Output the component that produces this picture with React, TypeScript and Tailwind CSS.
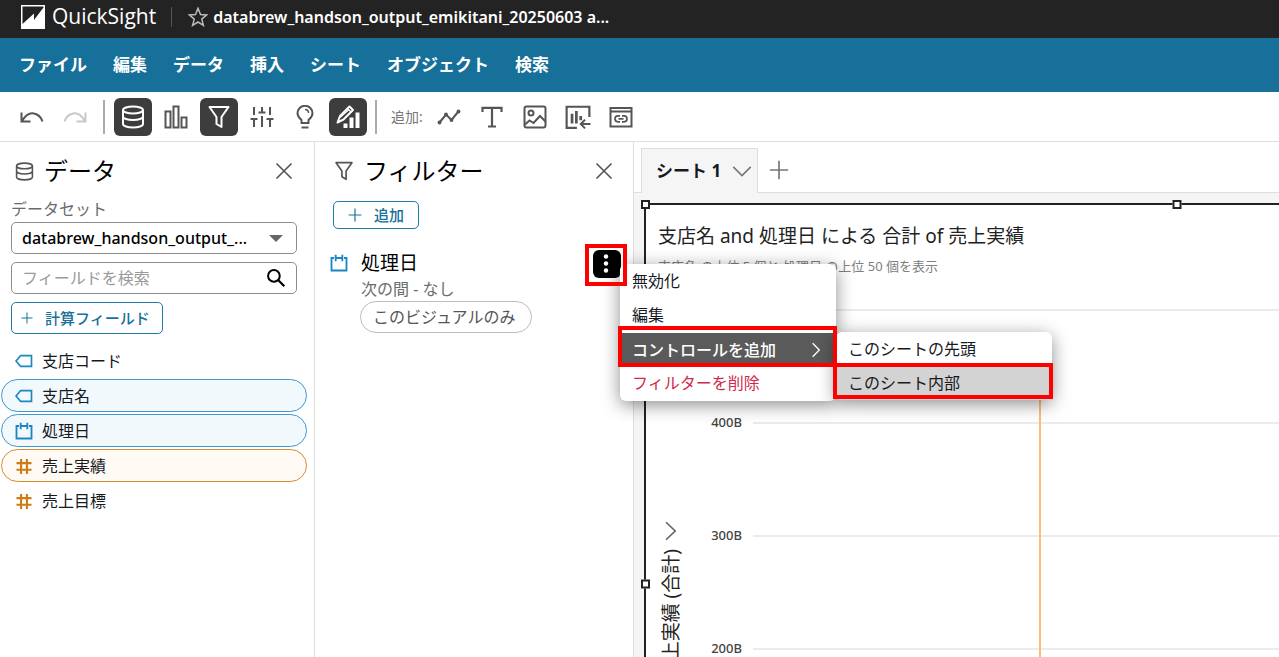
import type { ReactNode, SVGProps } from 'react'
import clsx from 'clsx'

function Icon({ children, className = 'size-6', ...props }: SVGProps<SVGSVGElement>) {
  return (
    <svg
      className={className}
      viewBox="0 0 24 24"
      fill="none"
      stroke="currentColor"
      strokeWidth={2}
      aria-hidden="true"
      {...props}
    >
      {children}
    </svg>
  )
}

const DatabaseIcon = ({ className }: { className?: string }) => (
  <Icon className={className}>
    <ellipse cx="12" cy="5" rx="10" ry="3.6" />
    <path d="M2 5v14c0 2 4.500 3.600 10 3.600s10-1.600 10-3.600V5M2 11.500c0 2 4.500 3.600 10 3.600s10-1.600 10-3.600" />
  </Icon>
)

const FilterIcon = ({ className }: { className?: string }) => (
  <Icon className={className} strokeLinejoin="round">
    <path d="M2.500 2h19L14.500 12v10l-5-3v-7z" />
  </Icon>
)

const CloseIcon = () => (
  <Icon className="size-5">
    <path d="M3 3l18 18M21 3L3 21" />
  </Icon>
)

const PlusIcon = ({ className }: { className?: string }) => (
  <Icon className={className}>
    <path d="M12 1v22M1 12h22" />
  </Icon>
)

const TagIcon = () => (
  <Icon className="size-5 text-[#1a86c4]">
    <path d="M8 5.500h13v13H8L2.500 12z" />
  </Icon>
)

const CalendarIcon = () => (
  <Icon className="size-5 text-[#1a86c4]">
    <path d="M6 6H3v15h18V6h-3M9 6h6M8 2v8M16 2v8" strokeWidth={2.200} />
  </Icon>
)

const HashIcon = () => (
  <Icon className="size-5 text-[#cf7a12]">
    <path d="M8.500 3.500v18M15.500 3.500v18M3 8.500h18M3 16.500h18" strokeWidth={2.500} />
  </Icon>
)

function ToolButton({ label, active, children }: { label: string; active?: boolean; children: ReactNode }) {
  return (
    <button
      type="button"
      aria-label={label}
      aria-pressed={active}
      className={clsx(
        'flex size-[38px] items-center justify-center rounded-md',
        active ? 'bg-[#3d3d3d] text-white' : 'text-[#555]'
      )}
    >
      {children}
    </button>
  )
}

function Toolbar() {
  return (
    <div className="flex h-[50px] shrink-0 items-center border-b border-[#dedede] bg-white pl-[13px]">
      <div className="flex gap-[5px]">
        <ToolButton label="元に戻す">
          <Icon>
            <path d="M1.500 7.500v9h9M2 16C6 9.500 10 7.500 14 8.500c4 .8 7 3.500 8.500 8" />
          </Icon>
        </ToolButton>
        <ToolButton label="やり直す">
          <Icon className="size-6 text-[#c8c8c8]">
            <path d="M22.500 7.500v9h-9M22 16C18 9.500 14 7.500 10 8.500c-4 .8-7 3.500-8.500 8" />
          </Icon>
        </ToolButton>
      </div>
      <div className="mx-[9px] h-[34px] w-[2px] bg-[#ababab]" />
      <div className="flex gap-[5px]">
        <ToolButton label="データ" active>
          <DatabaseIcon className="size-6" />
        </ToolButton>
        <ToolButton label="ビジュアル">
          <Icon>
            <path d="M1.500 6.500h5v16h-5zM9.500 1.500h5v21h-5zM17.500 12.500h5v10h-5z" />
          </Icon>
        </ToolButton>
        <ToolButton label="フィルター" active>
          <FilterIcon className="size-6" />
        </ToolButton>
        <ToolButton label="パラメータ">
          <Icon>
            <path d="M4 2v8M4 13v9M12 2v5M12 11v11M20 2v8M20 14v8M.500 14h7M8.500 7.500h7M16.500 14h7" />
          </Icon>
        </ToolButton>
        <ToolButton label="インサイト">
          <Icon>
            <path d="M8.500 18v-3C6 13 4.500 11 4.500 8.300a7.500 7.500 0 0 1 15 0c0 2.700-1.500 4.700-4 6.700v3zM8.500 22.500h7" />
            <path d="M12 4.500c2 0 3.500 1.500 3.500 3.500" strokeWidth={1.500} />
          </Icon>
        </ToolButton>
        <ToolButton label="プロパティ" active>
          <Icon strokeLinejoin="round">
            <path d="M1.500 17.500l2.500-6.500L13.500 1.500l3.500 3.500-9.500 9.500z" />
            <path d="M11.500 3.500l3.500 3.500M4 12.500l9-8" strokeWidth={1.300} />
            <path d="M7.500 18.500h4v4.500h-4zM13.500 12.500h4V23h-4zM19.500 7.500h4V23h-4z" fill="currentColor" stroke="none" />
          </Icon>
        </ToolButton>
      </div>
      <div className="mr-[14px] ml-2 h-[34px] w-[2px] bg-[#ababab]" />
      <span className="w-[39px] text-sm text-[#777]">追加:</span>
      <div className="flex gap-[5px]">
        <ToolButton label="ビジュアルを追加">
          <Icon>
            <path d="M2.500 17.500L9 9.500l5.500 5.500L21 7" />
            <g fill="currentColor" stroke="none">
              <circle cx="2.500" cy="17.500" r="1.900" />
              <circle cx="9" cy="9.500" r="1.900" />
              <circle cx="14.500" cy="15" r="1.900" />
              <circle cx="21.500" cy="6.500" r="1.900" />
            </g>
          </Icon>
        </ToolButton>
        <ToolButton label="テキストを追加">
          <Icon strokeWidth={2.200}>
            <path d="M2.500 7V2.800h19V7M12 3v18.500M8 21.500h8" />
          </Icon>
        </ToolButton>
        <ToolButton label="画像を追加">
          <Icon>
            <rect x="1.500" y="1.500" width="21" height="21" rx="2" />
            <circle cx="8" cy="8" r="2.500" />
            <path d="M2 19.500l4.500-4 4 2.500L17 11l5.500 5.500" />
          </Icon>
        </ToolButton>
        <ToolButton label="アセットをインポート">
          <Icon className="size-[26px]">
            <path d="M11 22H1.500V2.500h21V12" />
            <path d="M6.500 9v9M10.500 6.500V18M14.500 11v4" strokeWidth={2.500} />
            <path d="M23.500 18.500H15M18.500 14.500l-4 4 4 4" strokeWidth={1.800} />
          </Icon>
        </ToolButton>
        <ToolButton label="カスタムコンテンツを追加">
          <Icon>
            <path d="M1.500 3h21v18.500h-21zM1.500 6.500h21" />
            <path d="M11 10.800H9a3 3 0 0 0 0 6h2M13 10.800h2a3 3 0 0 1 0 6h-2M9.500 13.800h5" strokeWidth={1.700} />
          </Icon>
        </ToolButton>
      </div>
    </div>
  )
}

function PanelHeader({ icon, title }: { icon: ReactNode; title: string }) {
  return (
    <div className="flex h-[58px] items-center">
      {icon}
      <h2 className="ml-[10px] flex-1 text-2xl text-black">{title}</h2>
      <button type="button" aria-label={`${title}を閉じる`} className="text-[#555]">
        <CloseIcon />
      </button>
    </div>
  )
}

const fields = [
  { name: '支店コード', icon: <TagIcon />, style: 'border-transparent' },
  { name: '支店名', icon: <TagIcon />, style: 'border-[#3f97cf] bg-[#f2f9fd]' },
  { name: '処理日', icon: <CalendarIcon />, style: 'border-[#3f97cf] bg-[#f2f9fd]' },
  { name: '売上実績', icon: <HashIcon />, style: 'border-[#d68b2e] bg-[#fffbf4]' },
  { name: '売上目標', icon: <HashIcon />, style: 'border-transparent' },
]

function DataPanel() {
  return (
    <aside className="w-[315px] shrink-0 border-r border-[#dedede] bg-white">
      <div className="pr-[17px] pl-[11px]">
        <div className="pr-[3px] pl-1">
          <PanelHeader icon={<DatabaseIcon className="size-[19px] text-[#555]" />} title="データ" />
        </div>
        <label htmlFor="dataset" className="block h-[22px] text-base leading-[18px] text-[#6b6b6b]">
          データセット
        </label>
        <div className="relative">
          <select
            id="dataset"
            className="h-8 w-full appearance-none rounded-[5px] border border-[#8c8c8c] bg-white pr-10 pl-[10px] text-base font-medium text-black"
          >
            <option>databrew_handson_output_...</option>
          </select>
          <svg className="pointer-events-none absolute top-3 right-[13px] h-2 w-4" viewBox="0 0 16 8" aria-hidden="true">
            <path d="M1 1h14L8 8z" fill="#666" />
          </svg>
        </div>
        <div className="mt-2 flex h-8 items-center rounded-[5px] border border-[#8c8c8c] pr-[10px] pl-[10px]">
          <input
            type="search"
            aria-label="フィールドを検索"
            placeholder="フィールドを検索"
            className="min-w-0 flex-1 text-base outline-none placeholder:text-[#9a9a9a]"
          />
          <Icon className="size-5 text-black" strokeWidth={2.400}>
            <circle cx="9.500" cy="9.500" r="7" />
            <path d="M14.500 14.500l7.500 7.500" strokeWidth={2.600} />
          </Icon>
        </div>
        <button
          type="button"
          className="mt-2 flex h-8 items-center rounded-[5px] border border-[#1f7ba8] pr-3 pl-[9px] text-[15px] font-medium text-[#17709a]"
        >
          <PlusIcon className="mr-3 size-3" />
          計算フィールド
        </button>
      </div>
      <ul className="mt-[10px] mr-[7px] ml-[1px] flex flex-col gap-[2px]">
        {fields.map((field) => (
          <li
            key={field.name}
            className={clsx('flex h-[33px] items-center gap-2 rounded-full border pl-3 text-base text-[#16191f]', field.style)}
          >
            {field.icon}
            {field.name}
          </li>
        ))}
      </ul>
    </aside>
  )
}

function FilterMenu() {
  return (
    <ul
      role="menu"
      className="absolute top-[15px] left-[27px] w-[216px] rounded-md bg-white pb-[1px] text-base text-[#16191f] shadow-[0_4px_18px_rgba(0,0,0,0.45)]"
    >
      <li role="none">
        <button type="button" role="menuitem" className="flex h-[34px] w-full items-center px-3">
          無効化
        </button>
      </li>
      <li role="none">
        <button type="button" role="menuitem" className="flex h-[34px] w-full items-center px-3">
          編集
        </button>
      </li>
      <li role="none" className="relative">
        <button
          type="button"
          role="menuitem"
          aria-haspopup="menu"
          aria-expanded="true"
          className="flex h-[34px] w-full items-center justify-between border-t border-white bg-[#5a5a5a] pr-3 pl-3 font-medium text-white"
        >
          コントロールを追加
          <Icon className="size-4">
            <path d="M7 2l10 10L7 22" />
          </Icon>
        </button>
        <ul role="menu" className="absolute top-0 left-full w-[216px] rounded-md bg-white shadow-[0_4px_18px_rgba(0,0,0,0.45)]">
          <li role="none">
            <button type="button" role="menuitem" className="flex h-[34px] w-full items-center px-3">
              このシートの先頭
            </button>
          </li>
          <li role="none" className="relative">
            <button type="button" role="menuitem" className="flex h-[34px] w-full items-center rounded-b-md bg-[#d3d3d3] px-3">
              このシート内部
            </button>
            <span className="pointer-events-none absolute -top-[3px] -right-[1px] bottom-[1px] -left-[3px] border-4 border-[#f00]" />
          </li>
        </ul>
        <span className="pointer-events-none absolute -top-[6px] -right-[1px] -bottom-[1px] -left-[2px] border-4 border-[#f00]" />
      </li>
      <li role="none">
        <button type="button" role="menuitem" className="flex h-[34px] w-full items-center px-3 text-[#cf2a4d]">
          フィルターを削除
        </button>
      </li>
    </ul>
  )
}

function FilterPanel() {
  return (
    <aside className="relative z-10 w-[319px] shrink-0 border-r border-[#dedede] bg-white">
      <div className="pr-[19px] pl-[19px]">
        <PanelHeader icon={<FilterIcon className="size-5 text-[#555]" />} title="フィルター" />
      </div>
      <div className="pt-[1px] pr-3 pl-[18px]">
        <button
          type="button"
          className="flex h-7 items-center rounded-[5px] border border-[#1f7ba8] px-[14px] text-[15px] font-medium text-[#17709a]"
        >
          <PlusIcon className="mr-3 size-[14px]" />
          追加
        </button>
      </div>
      <div className="mt-5 flex items-start pr-3 pl-[14px]">
        <div className="mr-3 flex h-7 items-center">
          <CalendarIcon />
        </div>
        <div className="flex-1">
          <h3 className="flex h-7 items-center text-[19px] text-black">処理日</h3>
          <p className="flex h-6 items-center text-base text-[#6b6b6b]">次の間 - なし</p>
          <span className="-ml-[1px] inline-flex h-8 items-center rounded-full border border-[#bdbdbd] pr-4 pl-3 text-base text-[#555]">
            このビジュアルのみ
          </span>
        </div>
        <div className="relative">
          <button
            type="button"
            aria-label="フィルターオプション"
            className="mt-[1px] flex size-7 items-center justify-center rounded-md bg-black text-white"
          >
            <Icon fill="currentColor" stroke="none">
              <circle cx="11" cy="4.500" r="2.200" />
              <circle cx="11" cy="11.500" r="2.200" />
              <circle cx="11" cy="18.500" r="2.200" />
            </Icon>
          </button>
          <FilterMenu />
          <span className="pointer-events-none absolute -top-[5px] -left-2 size-[42px] border-4 border-[#f00]" />
        </div>
      </div>
    </aside>
  )
}

const ticks = ['500B', '400B', '300B', '200B', '100B']

function Visual() {
  const handle = 'absolute size-[9px] border-2 border-[#222] bg-white'

  return (
    <section className="relative mt-[10px] ml-[10px] h-[762px] w-[1066px] border-2 border-[#222] bg-white">
      <span className={clsx(handle, '-top-[5px] -left-[5px]')} />
      <span className={clsx(handle, '-top-[5px] left-1/2 -translate-x-1/2')} />
      <span className={clsx(handle, 'top-1/2 -left-[5px] -translate-y-1/2')} />

      <div className="h-[95px] pt-[17px] pl-3">
        <h3 className="text-[19px] leading-7 text-[#222]">支店名 and 処理日 による 合計 of 売上実績</h3>
        <p className="mt-[6px] text-[13px] leading-5 text-[#808080]">支店名 の上位 5 個と 処理日 の上位 50 個を表示</p>
      </div>

      <div className="flex pl-[1px]">
        <div className="flex w-12 shrink-0 flex-col items-center pt-[221px]">
          <Icon className="size-5 text-[#666]">
            <path d="M6 1.500L17 12 6 22.500" />
          </Icon>
          <span className="mt-2 rotate-180 text-[19px] leading-7 whitespace-nowrap text-[#222] [text-orientation:sideways] [writing-mode:vertical-rl]">
            売上実績 (合計)
          </span>
        </div>
        <div className="relative flex-1">
          {ticks.map((tick) => (
            <div key={tick} className="h-[113px]">
              <div className="flex h-5 items-center gap-[11px]">
                <span className="w-[47px] text-right text-[13px] font-medium text-[#444]">{tick}</span>
                <span className="h-[2px] flex-1 bg-[#ebebeb]" />
              </div>
            </div>
          ))}
          <span className="absolute top-[60px] bottom-0 left-[344px] w-[2px] bg-[#fabf7a]" />
        </div>
      </div>
    </section>
  )
}

function Sheet() {
  return (
    <main className="flex min-w-0 flex-1 flex-col overflow-hidden bg-[#f5f5f5]">
      <div className="flex h-[51px] shrink-0 items-end bg-white">
        <div className="h-full w-[7px] border-b border-[#dedede]" />
        <div className="flex h-[45px] items-center border border-b-0 border-[#dedede] bg-[#f5f5f5] pr-[5px] pl-[14px]">
          <button type="button" className="text-[17px] font-bold text-[#16191f]">
            シート 1
          </button>
          <button type="button" aria-label="シートメニュー" className="ml-[11px] text-[#777]">
            <Icon className="size-5">
              <path d="M1.500 7L12 17.500 22.500 7" />
            </Icon>
          </button>
        </div>
        <div className="flex h-full flex-1 items-center border-b border-[#dedede] pt-[5px] pl-[11px]">
          <button type="button" aria-label="シートを追加" className="text-[#777]">
            <PlusIcon className="size-5" />
          </button>
        </div>
      </div>
      <div className="min-h-0 flex-1 overflow-hidden">
        <Visual />
      </div>
    </main>
  )
}

const menus = ['ファイル', '編集', 'データ', '挿入', 'シート', 'オブジェクト', '検索']

export default function App() {
  return (
    <div className="flex h-screen flex-col overflow-hidden bg-white font-['Noto_Sans','Noto_Sans_CJK_JP',sans-serif]">
      <header className="flex h-[38px] shrink-0 items-center bg-[#232323] pb-1 pl-[21px] text-white">
        <svg className="mr-[7px] size-6" viewBox="0 0 24 24" aria-hidden="true">
          <path d="M0 0h24v24H0z" fill="#fff" />
          <path d="M1.500 1.500h21v1L13 15V8.500L1.500 19z" fill="#232323" />
        </svg>
        <span className="font-['Open_Sans','Noto_Sans',sans-serif] text-[21px]">QuickSight</span>
        <div className="mr-4 ml-[15px] h-5 w-[1px] bg-[#555]" />
        <button type="button" aria-label="お気に入り" className="text-[#bbb]">
          <Icon className="size-5" strokeWidth={1.800}>
            <path d="M12 1.500l3 7.500 7.500.5-6 5 2 7.500-6.500-4-6.500 4 2-7.500-6-5L9 9z" />
          </Icon>
        </button>
        <h1 className="ml-[5px] text-base font-semibold">databrew_handson_output_emikitani_20250603 a...</h1>
      </header>

      <nav className="flex h-[54px] shrink-0 items-center gap-[26px] bg-[#17709a] pl-[19px]">
        {menus.map((menu) => (
          <button key={menu} type="button" className="text-[17px] font-bold text-white">
            {menu}
          </button>
        ))}
      </nav>

      <Toolbar />

      <div className="flex min-h-0 flex-1">
        <DataPanel />
        <FilterPanel />
        <Sheet />
      </div>
    </div>
  )
}
